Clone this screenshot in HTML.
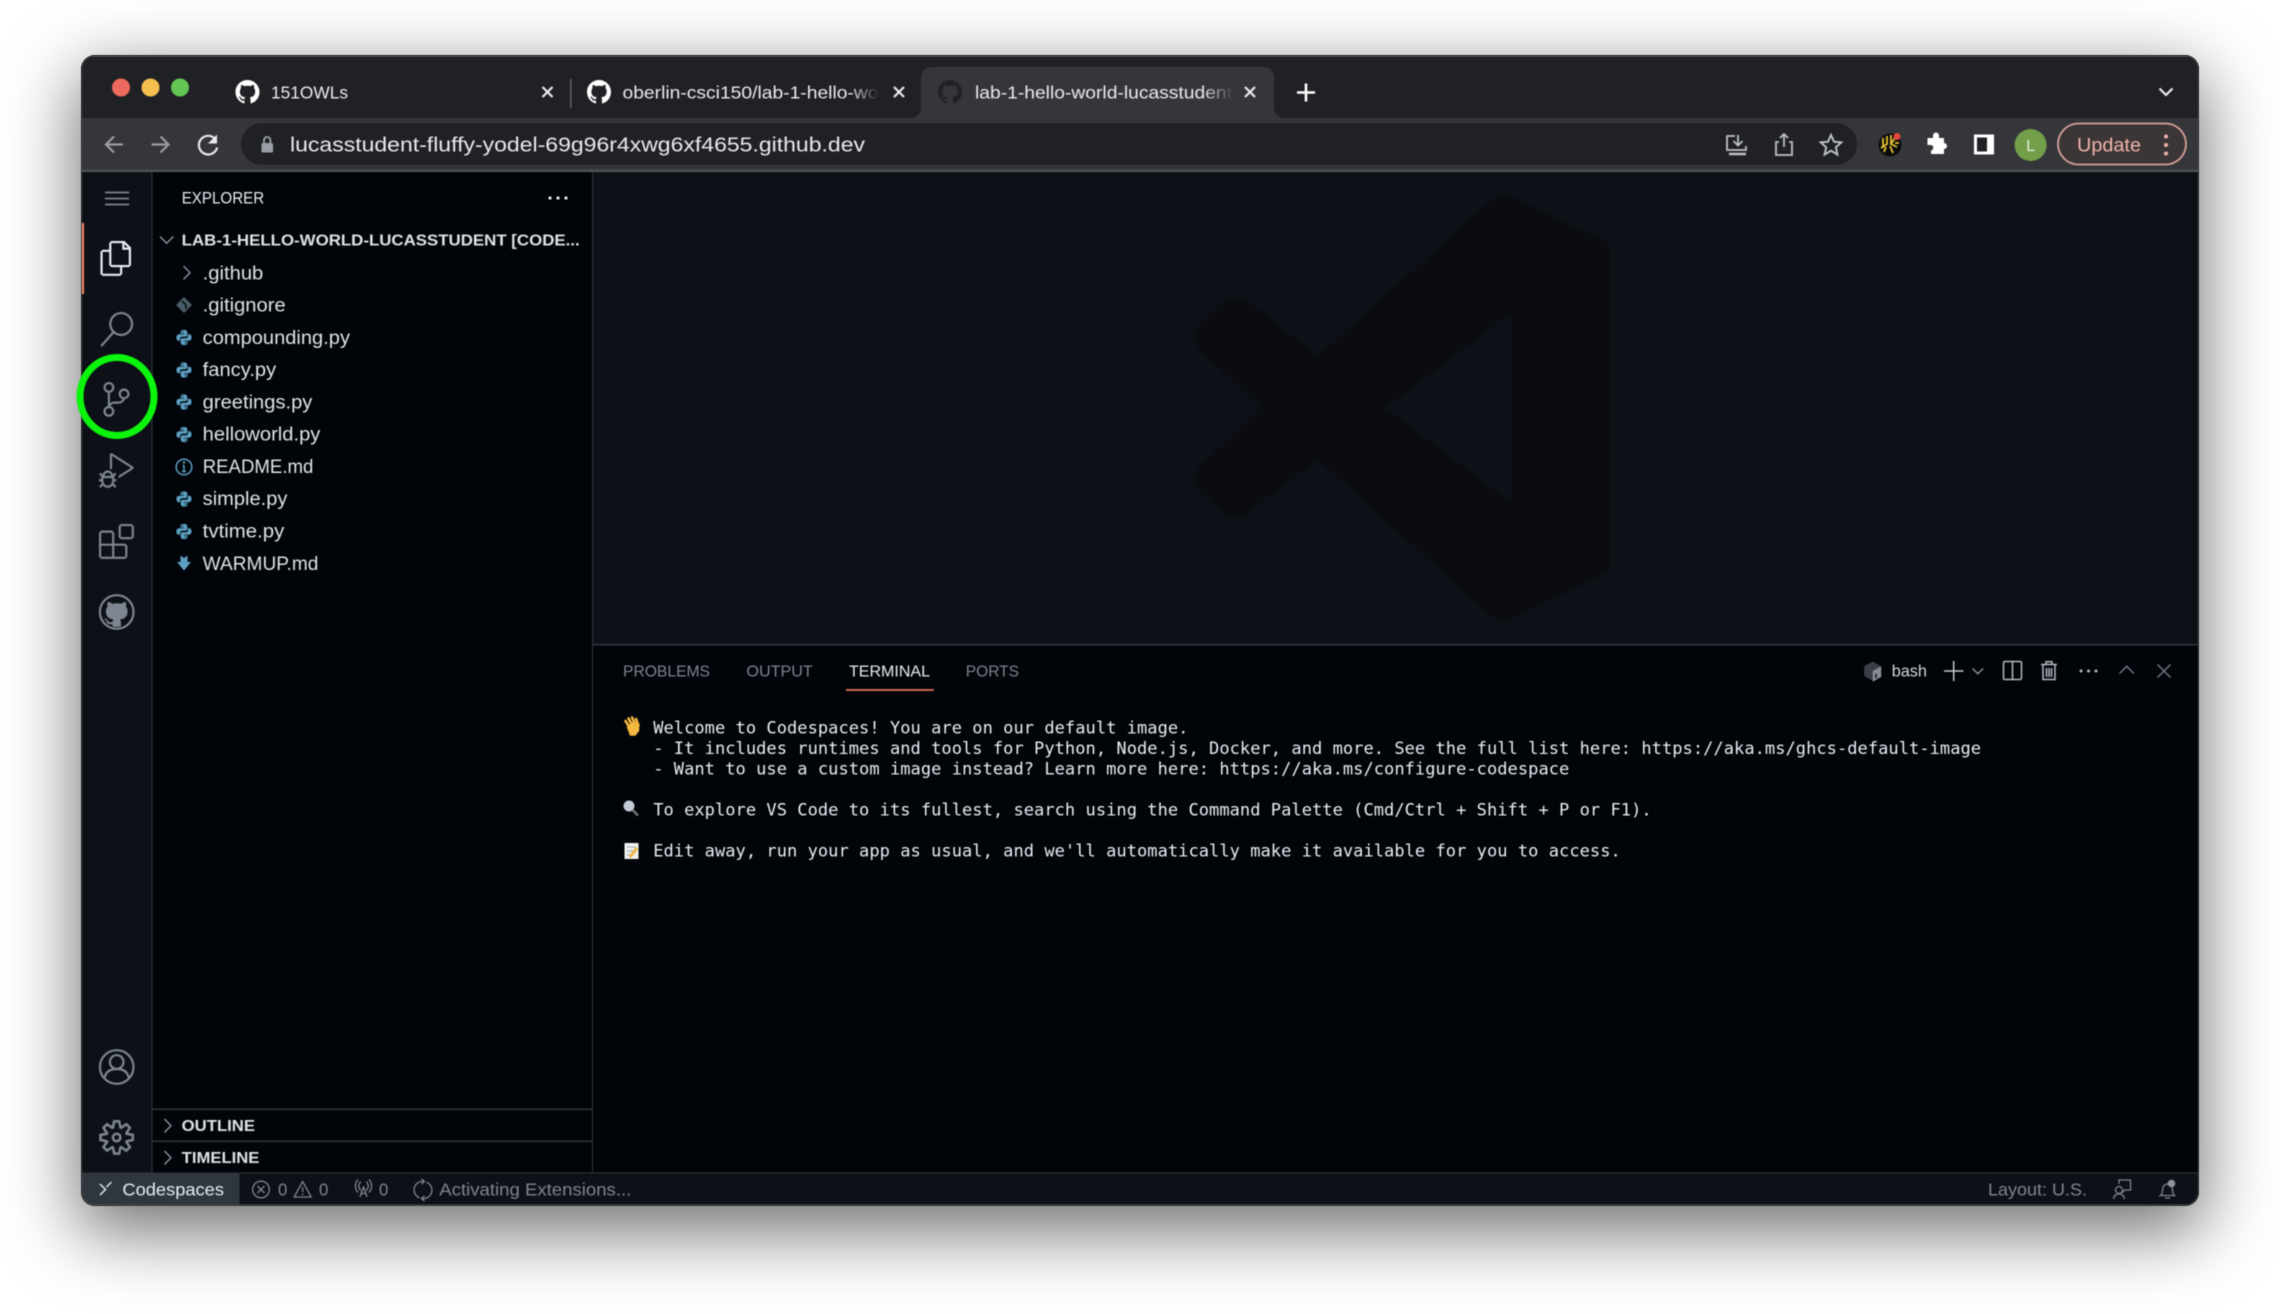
<!DOCTYPE html>
<html><head><meta charset="utf-8"><style>
html,body{margin:0;padding:0;background:#fff;width:2280px;height:1314px;overflow:hidden}
#w{position:absolute;left:81px;top:55px;width:2118px;height:1151px;border-radius:14px;box-shadow:0 22px 70px 4px rgba(0,0,0,.56);background:#202124}
svg{position:absolute;left:0;top:0;filter:blur(.4px)}
text{font-family:"Liberation Sans",sans-serif;white-space:pre}
.t{font-family:"DejaVu Sans Mono","Liberation Mono",monospace;font-size:17.05px;letter-spacing:.04px;fill:#e6edf3}
.f{font-size:19px;fill:#dde3e8}
.b{font-size:15.5px;font-weight:bold;fill:#dde3e8}
.p{font-size:15.5px;fill:#7d8590}
.s{font-size:17.5px;fill:#7d8590}
.tb{font-size:17.5px;fill:#e8eaed}
</style></head><body>
<div id="w"></div>
<svg width="2280" height="1314" viewBox="0 0 2280 1314" xmlns="http://www.w3.org/2000/svg">
<defs>
<clipPath id="win"><rect x="81" y="55" width="2118" height="1151" rx="14"/></clipPath>
<linearGradient id="g2" gradientUnits="userSpaceOnUse" x1="850" x2="878" y1="0" y2="0"><stop offset="0" stop-color="#e8eaed"/><stop offset="1" stop-color="#e8eaed" stop-opacity=".05"/></linearGradient>
<linearGradient id="g3" gradientUnits="userSpaceOnUse" x1="1203" x2="1232" y1="0" y2="0"><stop offset="0" stop-color="#e8eaed"/><stop offset="1" stop-color="#e8eaed" stop-opacity=".05"/></linearGradient>
<path id="gh" d="M8 0C3.58 0 0 3.58 0 8c0 3.54 2.29 6.53 5.47 7.59.4.07.55-.17.55-.38 0-.19-.01-.82-.01-1.49-2.01.37-2.53-.49-2.69-.94-.09-.23-.48-.94-.82-1.13-.28-.15-.68-.52-.01-.53.63-.01 1.08.58 1.23.82.72 1.21 1.87.87 2.33.66.07-.52.28-.87.51-1.07-1.78-.2-3.64-.89-3.64-3.95 0-.87.31-1.59.82-2.15-.08-.2-.36-1.02.08-2.12 0 0 .67-.21 2.2.82.64-.18 1.32-.27 2-.27.68 0 1.36.09 2 .27 1.53-1.04 2.2-.82 2.2-.82.44 1.1.16 1.92.08 2.12.51.56.82 1.27.82 2.15 0 3.07-1.87 3.75-3.65 3.95.29.25.54.73.54 1.48 0 1.07-.01 1.93-.01 2.2 0 .21.15.46.55.38A8.013 8.013 0 0016 8c0-4.42-3.58-8-8-8z"/>
<g id="py" fill="#5b9fc1" fill-rule="evenodd"><path id="pyh" d="M-.2-7.6C-3.5-7.6-3.4-6-3.4-5.5V-3.9H.2V-3.2H-4.9C-6.6-3.2-7.6-1.8-7.600.1-7.6 2-6.6 3.200-5.200 3.200H-3.900V1.300C-3.900-.2-2.600-.8-1.600-.8H1.500C2.700-.8 3.300-1.600 3.300-2.700V-5.500C3.300-6.800 2-7.600-.2-7.600ZM-1.700-6.400A.7.7 0 1 0-1.699-6.400Z"/><use href="#pyh" transform="rotate(180)"/></g>
</defs>
<g clip-path="url(#win)">
<rect x="81" y="55" width="2118" height="1151" fill="#202124"/>
<rect x="81" y="55" width="2118" height="1.500" fill="#6a6b6e"/>
<!-- toolbar -->
<rect x="81" y="118" width="2118" height="53" fill="#35363a"/>
<rect x="81" y="170" width="2118" height="2" fill="#55565a"/>
<!-- traffic -->
<circle cx="121" cy="87.500" r="9" fill="#ed6a5e"/><circle cx="150.500" cy="87.500" r="9" fill="#f5bf4f"/><circle cx="180" cy="87.500" r="9" fill="#62c554"/>
<!-- tabs -->
<use href="#gh" transform="translate(235.500 80) scale(1.500)" fill="#fff"/>
<text x="271" y="98.500" class="tb" textLength="77" lengthAdjust="spacingAndGlyphs">151OWLs</text>
<path d="M542.500 87l10 10M552.500 87l-10 10" stroke="#e8eaed" stroke-width="2.200" fill="none"/>
<rect x="570" y="79" width="1.500" height="29" fill="#5f6064"/>
<use href="#gh" transform="translate(587 80) scale(1.500)" fill="#fff"/>
<text x="622.500" y="98.500" class="tb" style="fill:url(#g2)" textLength="256" lengthAdjust="spacingAndGlyphs">oberlin-csci150/lab-1-hello-wo</text>
<path d="M894 87l10 10M904 87l-10 10" stroke="#e8eaed" stroke-width="2.200" fill="none"/>
<path d="M909 118Q921 118 921 106V79Q921 67 933 67H1262Q1274 67 1274 79V106Q1274 118 1286 118Z" fill="#35363a"/>
<use href="#gh" transform="translate(938 80) scale(1.500)" fill="#202124"/>
<text x="975" y="98.500" class="tb" style="fill:url(#g3)" textLength="257" lengthAdjust="spacingAndGlyphs">lab-1-hello-world-lucasstudent</text>
<path d="M1245 87l10 10M1255 87l-10 10" stroke="#e8eaed" stroke-width="2.200" fill="none"/>
<path d="M1297 92.500h18M1306 83.500v18" stroke="#fff" stroke-width="2.600" fill="none"/>
<path d="M2159.500 88.500l6.500 6.500 6.500-6.500" stroke="#e8eaed" stroke-width="2.200" fill="none"/>
<!-- nav -->
<path d="M123 144.500H107M114 136.500l-8 8 8 8" stroke="#9a9ca0" stroke-width="2.200" fill="none"/>
<path d="M151.500 144.500h16M160.500 136.500l8 8-8 8" stroke="#9a9ca0" stroke-width="2.200" fill="none"/>
<path d="M215.200 139a9.300 9.300 0 1 0 2 8.500" stroke="#e8eaed" stroke-width="2.200" fill="none"/><path d="M217 134.500v9h-9z" fill="#e8eaed"/>
<!-- url pill -->
<rect x="241" y="123" width="1616" height="42" rx="21" fill="#202124"/>
<rect x="261.500" y="143" width="11.500" height="9.500" rx="1.500" fill="#9aa0a6"/><path d="M264 143.500v-3.300a3.200 3.200 0 0 1 6.400 0v3.300" stroke="#9aa0a6" stroke-width="1.800" fill="none"/>
<text x="290" y="151.500" style="font-size:20px;fill:#e8eaed" textLength="575" lengthAdjust="spacingAndGlyphs">lucasstudent-fluffy-yodel-69g96r4xwg6xf4655.github.dev</text>
<!-- right icons -->
<g stroke="#bdc1c6" stroke-width="1.800" fill="none">
<path d="M1735 136h-8v14h19v-4"/><path d="M1738 135v10M1733.500 141l4.500 4.500 4.500-4.500"/><path d="M1729 154h17" stroke-width="2.500"/>
<path d="M1779 142h-3v13h16v-13h-3"/><path d="M1784 147v-13M1780 138l4-4 4 4"/>
<path d="M1831 135l3 6.700 7.300.7-5.500 4.900 1.600 7.200-6.400-3.800-6.400 3.800 1.600-7.200-5.500-4.900 7.300-.7z" stroke-width="1.900"/>
</g>
<circle cx="1890" cy="145" r="11.500" fill="#0b0b0b"/>
<path d="M1883 138v10M1887 136v8l-6 4M1891 135v9M1895 138l-4 6 6 3M1890 146l3 7M1886 147l-2 5M1895 143h4" stroke="#e8c22e" stroke-width="1.800" fill="none"/>
<circle cx="1897" cy="136.500" r="3.500" fill="#e8453c"/>
<path d="M1933 135.500a3 3 0 0 1 6 0V138h5v5a3 3 0 0 1 0 6v5h-13v-3.500a2.800 2.800 0 0 0 0-5.500h-2.500-1V138h5.500z" fill="#fff"/>
<rect x="1974" y="134.500" width="20" height="20" fill="#fff"/><rect x="1977" y="137.500" width="10" height="14" fill="#202124"/>
<ellipse cx="2030.600" cy="145" rx="16" ry="16" fill="#739f4a"/>
<text x="2030.600" y="151" text-anchor="middle" style="font-size:15.500px;fill:#e8f0de">L</text>
<rect x="2058" y="123.500" width="128" height="41" rx="20.500" fill="#3c3536" stroke="#d7a199" stroke-width="1.800"/>
<text x="2077" y="151.500" style="font-size:19px;fill:#eeb4ab" textLength="64" lengthAdjust="spacingAndGlyphs">Update</text>
<circle cx="2166" cy="136.500" r="2" fill="#eeb4ab"/><circle cx="2166" cy="145" r="2" fill="#eeb4ab"/><circle cx="2166" cy="153.500" r="2" fill="#eeb4ab"/>

<!-- vscode regions -->
<rect x="81" y="172" width="70.500" height="1001" fill="#0d1117"/>
<rect x="151.500" y="172" width="1" height="1001" fill="#30363d"/>
<rect x="152.500" y="172" width="439.500" height="1001" fill="#010409"/>
<rect x="592" y="172" width="1" height="1001" fill="#30363d"/>
<rect x="593" y="172" width="1606" height="472" fill="#0d1117"/>
<rect x="593" y="644" width="1606" height="1.500" fill="#30363d"/>
<rect x="593" y="645.500" width="1606" height="527.500" fill="#010409"/>
<rect x="81" y="1173" width="2118" height="33" fill="#0d1117"/>
<rect x="81" y="1172.500" width="2118" height="1" fill="#30363d"/>
<rect x="81" y="1173" width="158.500" height="33" fill="#30363d"/>
<!-- watermark -->
<path transform="translate(1150 170) scale(.33333)" fill="#0a0c0f" fill-rule="evenodd" d="M1020 95Q1060 60 1105 90L1378 220V1205L1105 1335Q1060 1365 1020 1335L503 868 290 1030Q255 1055 220 1030L150 965Q115 928 150 890L333 713 150 540Q115 500 150 460L215 400Q250 370 295 395L503 558ZM1087 425L707 713 1087 1000Z"/>

<!-- activity bar -->
<path d="M105 192.500h24M105 198.500h24M105 204.500h24" stroke="#7d8590" stroke-width="1.700" fill="none"/>
<rect x="81" y="223" width="3" height="71" fill="#f78166"/>
<path transform="translate(99 241) scale(1.454)" fill="#e6edf3" d="M17.500 0h-9L7 1.500V6H2.500L1 7.500v15.070L2.500 24h12.070L16 22.570V18h4.700l1.300-1.430V4.500L17.500 0zm0 2.120l2.380 2.380H17.500V2.120zm-3 20.380h-12v-15H7v9.070L8.500 18h6v4.500zm6-6h-12v-15H16V6h4.500v10.500z"/>
<path transform="translate(99 312) scale(1.454)" fill="#7d8590" d="M15.250 0a8.250 8.250 0 0 0-6.180 13.720L1 22.880l1.120 1 8.050-9.120A8.251 8.251 0 1 0 15.250.01V0zm0 15a6.750 6.750 0 1 1 0-13.500 6.750 6.750 0 0 1 0 13.500z"/>
<path transform="translate(99 382) scale(1.454)" fill="#7d8590" d="M21.007 8.222A3.738 3.738 0 0 0 15.045 5.200a3.737 3.737 0 0 0 1.156 6.583 2.988 2.988 0 0 1-2.668 1.670h-2.990a4.456 4.456 0 0 0-2.989 1.165V7.400a3.737 3.737 0 1 0-1.494 0v9.117a3.776 3.776 0 1 0 1.816.099 2.990 2.990 0 0 1 2.668-1.667h2.990a4.484 4.484 0 0 0 4.223-3.039 3.736 3.736 0 0 0 3.250-3.687zM4.565 3.738a2.242 2.242 0 1 1 4.484 0 2.242 2.242 0 0 1-4.484 0zm4.484 16.441a2.242 2.242 0 1 1-4.484 0 2.242 2.242 0 0 1 4.484 0zm8.221-9.715a2.242 2.242 0 1 1 0-4.485 2.242 2.242 0 0 1 0 4.485z"/>
<path transform="translate(99 453) scale(1.454)" fill="#7d8590" d="M10.940 13.500l-1.320 1.320a3.730 3.730 0 0 0-7.240 0L1.060 13.500 0 14.560l1.720 1.720-.22.220V18H0v1.500h1.500v.08c.077.489.214.966.41 1.420L0 22.940 1.060 24l1.650-1.650A4.308 4.308 0 0 0 6 24a4.310 4.310 0 0 0 3.290-1.650L10.940 24 12 22.940 10.090 21c.198-.464.336-.951.41-1.450v-.1H12V18h-1.500v-1.500l-.22-.22L12 14.560l-1.060-1.060zM6 13.500a2.250 2.250 0 0 1 2.250 2.250h-4.500A2.250 2.250 0 0 1 6 13.500zm3 6a3.330 3.330 0 0 1-3 3 3.330 3.330 0 0 1-3-3v-2.250h6v2.250zm14.760-9.900v1.260L13.500 17.370V15.600l8.500-5.370L9 2v9.460a5.070 5.070 0 0 0-1.500-.72V.63L8.640 0l15.120 9.600z"/>
<path transform="translate(99 524) scale(1.454)" fill="#7d8590" d="M13.500 1.500L15 0h7.500L24 1.500V9l-1.500 1.500H15L13.500 9V1.500zm1.500 0V9h7.500V1.500H15zM0 15V6l1.500-1.500H9L10.500 6v7.500H18l1.500 1.500v7.500L18 24H1.500L0 22.500V15zm9-1.500V6H1.500v7.500H9zM9 15H1.500v7.500H9V15zm1.500 7.500H18V15h-7.500v7.500z"/>
<circle cx="116.700" cy="612" r="15" fill="#7d8590"/>
<use href="#gh" transform="translate(99.700 595) scale(2.125)" fill="#0d1117"/>
<circle cx="116.700" cy="612" r="16.800" fill="none" stroke="#7d8590" stroke-width="2.200"/>
<g fill="none" stroke="#7d8590" stroke-width="2.200"><circle cx="116.700" cy="1067" r="16.800"/><circle cx="116.700" cy="1062" r="6.800"/><path d="M104.500 1078.500c1-7 6-9.500 12.200-9.500s11.200 2.500 12.200 9.500"/></g>
<path transform="translate(99.200 1120) scale(1.454)" fill="#7d8590" d="M19.850 8.750l4.150.83v4.840l-4.150.83 2.350 3.520-3.430 3.430-3.520-2.350-.83 4.150H9.580l-.83-4.150-3.520 2.350-3.430-3.430 2.350-3.520L0 14.420V9.580l4.150-.83L1.800 5.230 5.230 1.800l3.520 2.350L9.580 0h4.840l.83 4.150 3.520-2.350 3.430 3.430-2.350 3.520zm-1.570 5.070l4-.81v-2l-4-.81-.54-1.300 2.290-3.430-1.430-1.430-3.430 2.290-1.300-.54-.81-4h-2l-.81 4-1.300.54-3.430-2.290-1.430 1.430L6.380 8.900l-.54 1.300-4 .81v2l4 .81.54 1.300-2.290 3.430 1.430 1.430 3.430-2.290 1.300.54.81 4h2l.81-4 1.300-.54 3.430 2.290 1.430-1.430-2.290-3.430.54-1.300zm-8.186-4.672A3.430 3.430 0 0 1 12 8.570 3.440 3.440 0 0 1 15.430 12a3.430 3.430 0 1 1-5.336-2.852zm.956 4.274c.281.188.612.288.95.288A1.700 1.700 0 0 0 13.710 12a1.710 1.710 0 1 0-2.660 1.422z"/>

<!-- explorer -->
<text x="181.700" y="203.500" style="font-size:16.500px;fill:#e6edf3" textLength="82.500" lengthAdjust="spacingAndGlyphs">EXPLORER</text>
<circle cx="550" cy="198" r="1.600" fill="#e6edf3"/><circle cx="558" cy="198" r="1.600" fill="#e6edf3"/><circle cx="566" cy="198" r="1.600" fill="#e6edf3"/>
<path d="M160 236.500l6.700 6.700 6.700-6.700" stroke="#8b949e" stroke-width="1.400" fill="none"/>
<text x="181.700" y="245.500" style="font-size:16px;font-weight:bold;fill:#dde3e8" textLength="398" lengthAdjust="spacingAndGlyphs">LAB-1-HELLO-WORLD-LUCASSTUDENT [CODE...</text>
<path d="M183.500 266l6.500 6.700-6.500 6.700" stroke="#8b949e" stroke-width="1.400" fill="none"/>
<text x="202.700" y="279.300" class="f" textLength="60.600" lengthAdjust="spacingAndGlyphs">.github</text>
<text x="202.700" y="311.600" class="f" textLength="83" lengthAdjust="spacingAndGlyphs">.gitignore</text>
<text x="202.700" y="343.800" class="f" textLength="147.300" lengthAdjust="spacingAndGlyphs">compounding.py</text>
<text x="202.700" y="376" class="f" textLength="73.500" lengthAdjust="spacingAndGlyphs">fancy.py</text>
<text x="202.700" y="408.300" class="f" textLength="109.700" lengthAdjust="spacingAndGlyphs">greetings.py</text>
<text x="202.700" y="440.500" class="f" textLength="117.700" lengthAdjust="spacingAndGlyphs">helloworld.py</text>
<text x="202.700" y="472.800" class="f" textLength="110.700" lengthAdjust="spacingAndGlyphs">README.md</text>
<text x="202.700" y="505" class="f" textLength="84.700" lengthAdjust="spacingAndGlyphs">simple.py</text>
<text x="202.700" y="537.300" class="f" textLength="81.700" lengthAdjust="spacingAndGlyphs">tvtime.py</text>
<text x="202.700" y="569.800" class="f" textLength="115.700" lengthAdjust="spacingAndGlyphs">WARMUP.md</text>
<path d="M184 297l8 8-8 8-8-8z" fill="#4a5c67"/><path d="M182 301l4 4v4" stroke="#010409" stroke-width="1.400" fill="none"/>
<use href="#py" x="184" y="337.500"/><use href="#py" x="184" y="370"/><use href="#py" x="184" y="402"/><use href="#py" x="184" y="434.500"/>
<circle cx="184" cy="467" r="7.800" fill="none" stroke="#5b9fc1" stroke-width="1.500"/><path d="M184 465.500v5.500M182 471.500h4M182.500 465.500h1.500" stroke="#5b9fc1" stroke-width="1.500" fill="none"/><circle cx="184" cy="462.500" r="1.200" fill="#5b9fc1"/>
<use href="#py" x="184" y="499"/><use href="#py" x="184" y="531.500"/>
<path d="M180.500 555.500l3.500 2.500 3.500-2.500v6.500h3.500l-7 8.500-7-8.500h3.500z" fill="#5b9fc1"/>
<rect x="152.500" y="1108.500" width="439.500" height="1.500" fill="#30363d"/>
<rect x="152.500" y="1140.500" width="439.500" height="1.500" fill="#30363d"/>
<path d="M164.500 1119l6.500 6.700-6.500 6.700M164.500 1151l6.500 6.700-6.500 6.700" stroke="#8b949e" stroke-width="1.400" fill="none"/>
<text x="181.700" y="1130.900" class="b" textLength="73.300" lengthAdjust="spacingAndGlyphs">OUTLINE</text>
<text x="181.700" y="1163.100" class="b" textLength="77.700" lengthAdjust="spacingAndGlyphs">TIMELINE</text>

<!-- panel tabs -->
<text x="623" y="676.700" class="p" textLength="87" lengthAdjust="spacingAndGlyphs">PROBLEMS</text>
<text x="746.400" y="676.700" class="p" textLength="66.400" lengthAdjust="spacingAndGlyphs">OUTPUT</text>
<text x="849" y="676.700" class="p" style="fill:#e6edf3" textLength="81" lengthAdjust="spacingAndGlyphs">TERMINAL</text>
<text x="965.800" y="676.700" class="p" textLength="53.200" lengthAdjust="spacingAndGlyphs">PORTS</text>
<rect x="846" y="689" width="87.700" height="2" fill="#d0684f"/>
<!-- panel right icons -->
<path d="M1872.700 661.500l8.500 4.800v9.600l-8.500 4.800-8.500-4.800v-9.600z" fill="#3a3f45"/><path d="M1872.700 671v10.700l8.500-4.800v-10.600z" fill="#868c93"/><path d="M1876 674v4" stroke="#0d1117" stroke-width="1.500"/>
<text x="1891.700" y="676.700" style="font-size:16.500px;fill:#d0d7de" textLength="35.300" lengthAdjust="spacingAndGlyphs">bash</text>
<path d="M1944 671h19.500M1953.700 661v20" stroke="#c2c8ce" stroke-width="1.500" fill="none"/>
<path d="M1972.500 668.500l5.300 5.300 5.300-5.300" stroke="#8b949e" stroke-width="1.400" fill="none"/>
<rect x="2003.500" y="661.500" width="18" height="18" rx="1.500" fill="none" stroke="#b4bac1" stroke-width="1.500"/><path d="M2012.500 662v17" stroke="#b4bac1" stroke-width="1.500"/>
<path d="M2041 664.500h16M2046 664v-2.300h6v2.300M2043 665v14.500h12V665M2046.500 668v9M2049 668v9M2051.500 668v9" stroke="#b4bac1" stroke-width="1.500" fill="none"/>
<circle cx="2081" cy="671" r="1.500" fill="#b4bac1"/><circle cx="2088.500" cy="671" r="1.500" fill="#b4bac1"/><circle cx="2096" cy="671" r="1.500" fill="#b4bac1"/>
<path d="M2119.500 673.500l7.200-7.200 7.200 7.200" stroke="#6e7681" stroke-width="1.500" fill="none"/>
<path d="M2157.500 664.500l13 13M2170.500 664.500l-13 13" stroke="#6e7681" stroke-width="1.500" fill="none"/>

<!-- terminal -->
<text x="653.200" y="733.300" class="t">Welcome to Codespaces! You are on our default image.</text>
<text x="653.200" y="754" class="t">- It includes runtimes and tools for Python, Node.js, Docker, and more. See the full list here: https://aka.ms/ghcs-default-image</text>
<text x="653.200" y="774.500" class="t">- Want to use a custom image instead? Learn more here: https://aka.ms/configure-codespace</text>
<text x="653.200" y="815.500" class="t">To explore VS Code to its fullest, search using the Command Palette (Cmd/Ctrl + Shift + P or F1).</text>
<text x="653.200" y="856.500" class="t">Edit away, run your app as usual, and we'll automatically make it available for you to access.</text>
<!-- emoji as shapes -->
<g stroke="#f4b73f" stroke-linecap="round" fill="none"><path d="M625.500 721l4.500 7M628.500 718.500l4 7.500M632 717.500l3.500 7.500M636 719l2.500 6.500" stroke-width="2.600"/><path d="M627.500 727l3 8h4.500l3.500-4.500v-5.500l-6-2z" fill="#f4b73f" stroke-width="1.500"/></g>
<circle cx="629" cy="806" r="5.500" fill="#c3ccd6"/><path d="M632.500 810l5.500 5.500" stroke="#6d7278" stroke-width="2.600"/>
<rect x="624.500" y="843" width="14" height="16" fill="#f0f0f0"/><path d="M627 847h9M627 851h6M627 855h4" stroke="#9aa" stroke-width="1"/><path d="M630 857l7-9" stroke="#eeb63e" stroke-width="3"/>

<!-- status bar -->
<path d="M100 1184l5.500 5.500-5.500 5.500M111.500 1182l-5 5" stroke="#dde3e8" stroke-width="1.500" fill="none"/>
<text x="122.400" y="1195.700" style="font-size:17.500px;fill:#e6edf3" textLength="101.600" lengthAdjust="spacingAndGlyphs">Codespaces</text>
<g fill="none" stroke="#7d8590" stroke-width="1.300">
<circle cx="261" cy="1189.500" r="8.300"/><path d="M257.500 1186l7 7M264.500 1186l-7 7"/>
<path d="M302.700 1181.500l8.500 15.500h-17z"/><path d="M302.700 1187v5M302.700 1193.500v1.500"/>
<path d="M363.500 1186.500l-3.500 10.500M363.500 1186.500l3.500 10.500M361 1193.500h5M360.800 1181.500a6 6 0 0 0 0 9M366.200 1181.500a6 6 0 0 1 0 9M358 1179.500a9.500 9.500 0 0 0 0 13M369 1179.500a9.500 9.500 0 0 1 0 13"/>
<path d="M424 1181.500A8.500 8.500 0 0 0 419.500 1197.800M422 1198.500A8.500 8.500 0 0 0 426.500 1182.200M421.500 1178.800l3 2.700-3 2.700M424.500 1195.800l-3 2.700 3 2.700"/>
</g>
<text x="278" y="1195.700" class="s" textLength="9.300" lengthAdjust="spacingAndGlyphs">0</text>
<text x="319" y="1195.700" class="s" textLength="9.300" lengthAdjust="spacingAndGlyphs">0</text>
<text x="379" y="1195.700" class="s" textLength="9.300" lengthAdjust="spacingAndGlyphs">0</text>
<text x="439.300" y="1195.700" class="s" textLength="192" lengthAdjust="spacingAndGlyphs">Activating Extensions...</text>
<text x="1988" y="1195.700" class="s" textLength="99" lengthAdjust="spacingAndGlyphs">Layout: U.S.</text>
<g fill="none" stroke="#7d8590" stroke-width="1.300">
<path d="M2119 1184v-4h11.500v10h-5.500l-3.500 3"/><circle cx="2119" cy="1190" r="3.500"/><path d="M2113.500 1199c.5-3.500 2.500-5 5.500-5s5 1.500 5.500 5"/>
<path d="M2160.500 1195.500c2.500-1.500 1.500-5 2.500-8 .7-2.200 2.500-3.500 4.500-3.500 2 0 3.500 1 4.500 3 1 3-.2 6.500 2.500 8.500z"/><path d="M2165 1198h5"/>
</g>
<circle cx="2171.500" cy="1183.500" r="3.800" fill="#8b949e"/>
<rect x="81" y="1204.500" width="2118" height="1.500" fill="#46484c"/>
</g>
<rect x="81.500" y="55.500" width="2117" height="1150" rx="14" fill="none" stroke="#55565a" stroke-width="1"/>
<ellipse cx="117" cy="396.500" rx="37" ry="39" fill="none" stroke="#0cf50c" stroke-width="7"/>
</svg>
</body></html>
